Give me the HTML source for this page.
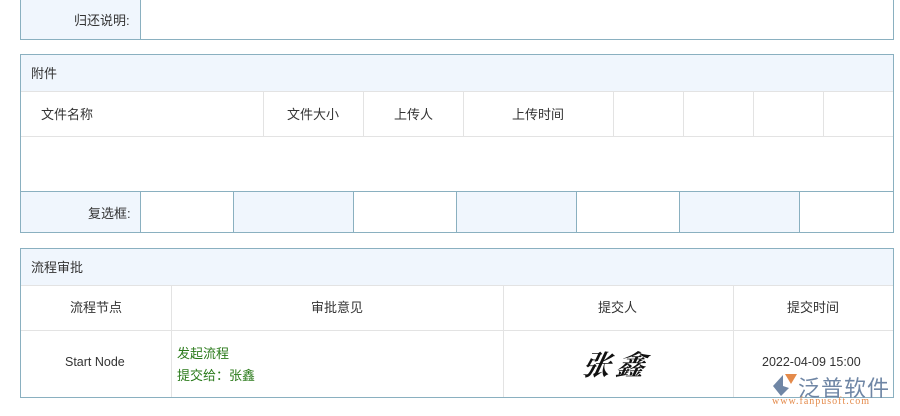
<!DOCTYPE html>
<html><head><meta charset="utf-8"><style>
body{margin:0;width:900px;height:416px;background:#fff;position:relative;overflow:hidden;font-family:"Liberation Sans","Noto Sans CJK SC",sans-serif;font-size:13px;color:#333}
div{position:absolute;box-sizing:border-box}
.ob{border:1px solid #8ab0c0}
.bl{background:#f0f6fd}
.t{white-space:nowrap}
.vl{width:1px;background:#e3e3e3}
.hl{height:1px;background:#e3e3e3}
.vb{width:1px;background:#8ab0c0}
</style></head><body>
<div class="ob" style="left:20px;top:-2px;width:874px;height:42px"></div>
<div class="bl" style="left:21px;top:0;width:119px;height:39px"></div>
<div class="vb" style="left:140px;top:0;height:39px"></div>
<div class="t" style="left:74px;top:10px">归还说明:</div>
<div class="ob" style="left:20px;top:54px;width:874px;height:179px"></div>
<div class="bl" style="left:21px;top:55px;width:872px;height:36px"></div>
<div class="hl" style="left:21px;top:91px;width:872px"></div>
<div class="t" style="left:31px;top:63px">附件</div>
<div class="hl" style="left:21px;top:136px;width:872px"></div>
<div class="vl" style="left:263px;top:91px;height:45px"></div>
<div class="vl" style="left:363px;top:91px;height:45px"></div>
<div class="vl" style="left:463px;top:91px;height:45px"></div>
<div class="vl" style="left:613px;top:91px;height:45px"></div>
<div class="vl" style="left:683px;top:91px;height:45px"></div>
<div class="vl" style="left:753px;top:91px;height:45px"></div>
<div class="vl" style="left:823px;top:91px;height:45px"></div>
<div class="t" style="left:41px;top:104px">文件名称</div>
<div class="t" style="left:287px;top:104px">文件大小</div>
<div class="t" style="left:394px;top:104px">上传人</div>
<div class="t" style="left:512px;top:104px">上传时间</div>
<div style="left:21px;top:191px;width:872px;height:1px;background:#8ab0c0"></div>
<div class="bl" style="left:21px;top:192px;width:119px;height:40px"></div>
<div class="bl" style="left:233px;top:192px;width:120px;height:40px"></div>
<div class="bl" style="left:456px;top:192px;width:120px;height:40px"></div>
<div class="bl" style="left:679px;top:192px;width:120px;height:40px"></div>
<div class="vb" style="left:140px;top:192px;height:40px"></div>
<div class="vb" style="left:233px;top:192px;height:40px"></div>
<div class="vb" style="left:353px;top:192px;height:40px"></div>
<div class="vb" style="left:456px;top:192px;height:40px"></div>
<div class="vb" style="left:576px;top:192px;height:40px"></div>
<div class="vb" style="left:679px;top:192px;height:40px"></div>
<div class="vb" style="left:799px;top:192px;height:40px"></div>
<div class="t" style="left:88px;top:203px">复选框:</div>
<div class="ob" style="left:20px;top:248px;width:874px;height:150px"></div>
<div class="bl" style="left:21px;top:249px;width:872px;height:36px"></div>
<div class="hl" style="left:21px;top:285px;width:872px"></div>
<div class="hl" style="left:21px;top:330px;width:872px"></div>
<div class="t" style="left:31px;top:257px">流程审批</div>
<div class="vl" style="left:171px;top:285px;height:112px"></div>
<div class="vl" style="left:503px;top:285px;height:112px"></div>
<div class="vl" style="left:733px;top:285px;height:112px"></div>
<div class="t" style="left:70px;top:297px">流程节点</div>
<div class="t" style="left:311px;top:297px">审批意见</div>
<div class="t" style="left:598px;top:297px">提交人</div>
<div class="t" style="left:787px;top:297px">提交时间</div>
<div class="t" style="left:65px;top:355px;font-size:12.5px">Start Node</div>
<div class="t" style="left:177px;top:343px;color:#2a7a1a">发起流程</div>
<div class="t" style="left:177px;top:365px;color:#2a7a1a">提交给：张鑫</div>
<div class="t" style="left:583px;top:344px;font-family:'Noto Serif CJK SC',serif;font-size:28px;font-style:italic;font-weight:bold;color:#111;letter-spacing:6px;transform:skewX(-12deg)">张鑫</div>
<div class="t" style="left:762px;top:355px;font-size:12.5px">2022-04-09 15:00</div>
<svg style="position:absolute;left:771px;top:373px" width="28" height="24" viewBox="0 0 28 24"><path d="M14 1 L26 1 L20 11 Z" fill="#e48a4a"/><path d="M12 2 L2 13 L10 23 L18 15 L12 13 Z" fill="#6f86a5"/></svg>
<div class="t" style="left:798px;top:371px;font-size:22px;color:#6f86a5;letter-spacing:1px">泛普软件</div>
<div class="t" style="left:772px;top:396px;font-size:10px;color:#e48a4a;font-family:'Liberation Serif',serif;letter-spacing:1px">www.fanpusoft.com</div>
</body></html>
